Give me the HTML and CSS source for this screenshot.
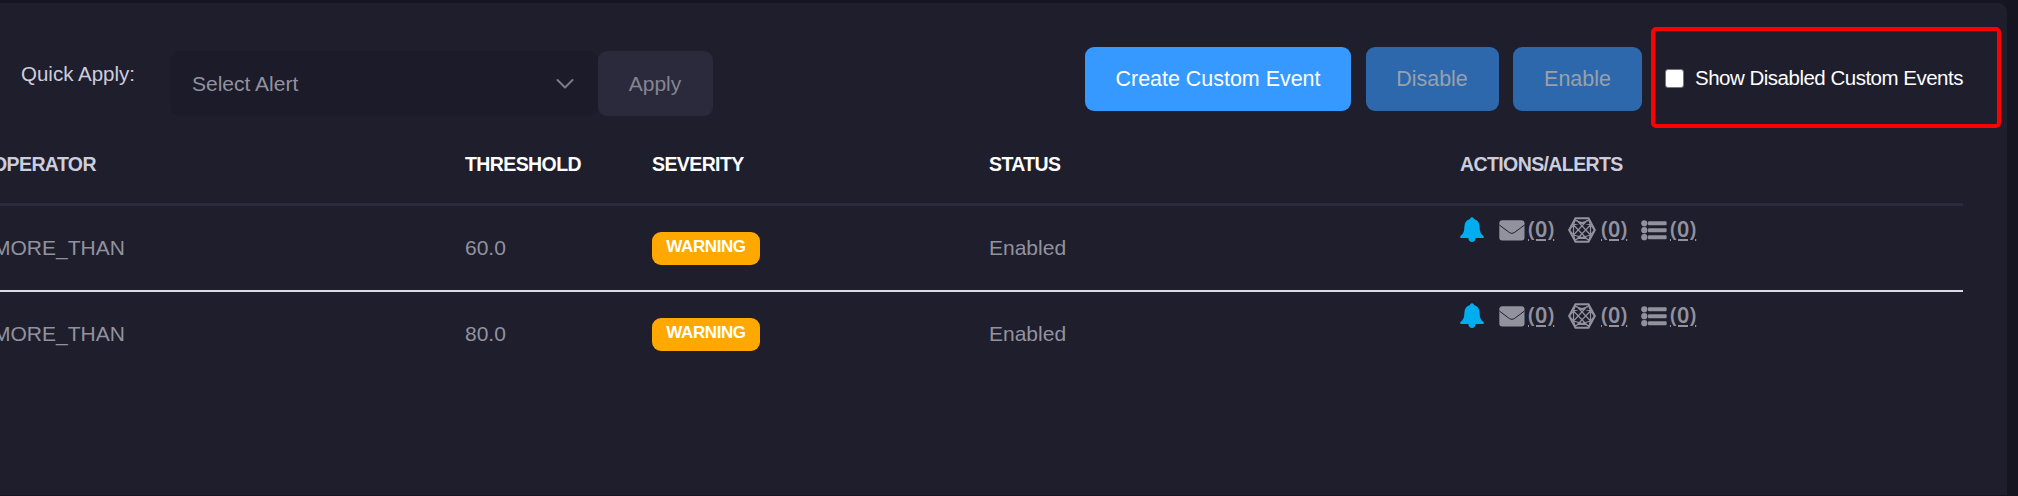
FILE: index.html
```html
<!DOCTYPE html>
<html lang="en">
<head>
<meta charset="utf-8">
<title>Custom Events</title>
<link rel="stylesheet" href="styles.css">
</head>
<body>
<svg class="sprite" aria-hidden="true">
  <symbol id="bell" viewBox="0 0 24 26"><path d="M12 0.300c1.200 0 1.900.8 1.900 1.800 3.500.9 5.500 3.600 5.700 7.400.2 5.200.9 7.100 3.800 9.400 1 .9.4 2.100-.8 2.100H1.400c-1.200 0-1.800-1.200-.8-2.100C3.500 16.600 4.200 14.700 4.400 9.500c.2-3.800 2.200-6.500 5.700-7.400 0-1 .7-1.800 1.900-1.800zM8.300 21h7.400c-.2 2.700-1.700 4-3.700 4s-3.500-1.300-3.700-4z"/></symbol>
  <symbol id="mail" viewBox="0 0 26 21"><rect x=".3" y=".3" width="25.200" height="20.200" rx="3"/><path class="cut" d="M.3 5 10.500 12.600Q12.900 14.300 15.300 12.600L25.500 5"/></symbol>
  <symbol id="mesh" viewBox="0 0 28 26"><g class="mesh-lines"><path class="mesh-edge" d="M7.500 1.300h13L26.900 13l-6.400 11.700h-13L1.100 13z"/><path d="M7.500 1.500 5.500 8v10l2 6.500M20.500 1.500l2 6.500v10l-2 6.500M5.500 8 21 3.500M22.500 8 7 3.500M5.500 18 21 22.500M22.500 18 7 22.500M5.500 8 20 23M22.500 8 8 23M5.500 18 19.500 3M22.500 18 8.500 3M1.500 13l4-5M26.500 13l-4-5M1.500 13l4 5M26.500 13l-4 5"/></g></symbol>
  <symbol id="list" viewBox="0 0 26 21"><circle cx="3.300" cy="3.300" r="3.100"/><circle cx="3.300" cy="10.200" r="3.100"/><circle cx="3.300" cy="17.200" r="3.100"/><rect x="7" y="1.300" width="18.600" height="4" rx="1"/><rect x="7" y="8.200" width="18.600" height="4" rx="1"/><rect x="7" y="15.200" width="18.600" height="4" rx="1"/></symbol>
</svg>
<main class="panel">
  <div class="toolbar">
    <span class="quick-label">Quick Apply:</span>
    <div class="select"><span>Select Alert</span><svg class="chevron" viewBox="0 0 18 12"><path d="M1.500 2 9 9.500 16.500 2"/></svg></div>
    <button class="btn apply">Apply</button>
    <div class="right">
      <button class="btn primary create">Create Custom Event</button>
      <button class="btn primary disable off">Disable</button>
      <button class="btn primary enable off">Enable</button>
      <label class="toggle"><span class="box"></span><span class="toggle-text">Show Disabled Custom Events</span></label>
    </div>
  </div>
  <div class="table">
    <div class="row head">
      <span class="muted">OPERATOR</span><span>THRESHOLD</span><span>SEVERITY</span><span>STATUS</span><span class="muted">ACTIONS/ALERTS</span>
    </div>
    <div class="row">
      <span class="op">MORE_THAN</span><span>60.0</span><span><b class="badge">WARNING</b></span><span>Enabled</span>
      <div class="actions">
        <svg class="bell"><use href="#bell"/></svg>
        <svg class="mail"><use href="#mail"/></svg><a>(0)</a>
        <svg class="mesh"><use href="#mesh"/></svg><a>(0)</a>
        <svg class="list"><use href="#list"/></svg><a>(0)</a>
      </div>
    </div>
    <div class="row last">
      <span class="op">MORE_THAN</span><span>80.0</span><span><b class="badge">WARNING</b></span><span>Enabled</span>
      <div class="actions">
        <svg class="bell"><use href="#bell"/></svg>
        <svg class="mail"><use href="#mail"/></svg><a>(0)</a>
        <svg class="mesh"><use href="#mesh"/></svg><a>(0)</a>
        <svg class="list"><use href="#list"/></svg><a>(0)</a>
      </div>
    </div>
  </div>
</main>
</body>
</html>
```
FILE: styles.css
```css
* { box-sizing: border-box; }
body {
  margin: 0;
  height: 496px;
  padding: 3px 11px 1px 0;
  overflow: hidden;
  background: #151521;
  color: #92929f;
  font: 21px/30px "Liberation Sans", Arial, sans-serif;
}
.sprite { position: absolute; width: 0; height: 0; }
.panel {
  height: 492px;
  padding: 24px 6px 0 0;
  background: #1e1e2d;
  border-radius: 0 9px 0 0;
}
.toolbar { display: flex; height: 101px; }
.quick-label {
  width: 150px;
  margin-left: 21px;
  padding-top: 32px;
  color: #cdcdde;
  font-size: 20.500px;
  line-height: 30px;
  white-space: nowrap;
}
.select {
  display: flex;
  align-items: center;
  justify-content: space-between;
  width: 427px;
  height: 65px;
  margin-top: 24px;
  padding: 0 24px 0 21px;
  background: #1b1b29;
  border-radius: 9px;
}
.chevron { width: 18px; height: 12px; fill: none; stroke: #7c7c89; stroke-width: 2; stroke-linecap: round; stroke-linejoin: round; }
.btn { padding: 0; border: 0; border-radius: 9px; font: inherit; white-space: nowrap; }
.apply { width: 115px; height: 65px; margin-top: 24px; padding-right: 1px; background: #2a2a3c; color: #858592; }
.right { display: flex; margin-left: auto; }
.primary { height: 64px; margin-top: 20px; background: #3699ff; color: #fff; font-size: 21.450px; }
.create { width: 266px; margin-right: 15px; }
.disable { width: 133px; margin-right: 14px; padding-right: 1px; }
.enable { width: 129px; margin-right: 9px; }
.off { background: #2d68ac; color: #99a0ab; }
.toggle {
  display: flex;
  width: 350px;
  height: 101px;
  padding: 38px 0 0 10px;
  border: 4px solid #fe0000;
  border-radius: 5px;
  color: #fff;
}
.box { width: 19px; height: 19px; background: #fff; border: 1px solid #767676; border-radius: 3px; }
.toggle-text { margin: -6px 0 0 11px; font-size: 20.500px; letter-spacing: -0.500px; white-space: nowrap; }
.table { margin-right: 38px; }
.row {
  display: grid;
  grid-template-columns: 465px 187px 337px 471px 1fr;
  height: 86px;
  padding-top: 27px;
  border-bottom: 2px solid #dcdce0;
}
.row.last { border-bottom-color: transparent; }
.head {
  height: 78px;
  padding-top: 21px;
  border-bottom: 3px solid #2b2b40;
  color: #fff;
  font-size: 19.500px;
  font-weight: bold;
  letter-spacing: -0.600px;
}
.muted { color: #cdcdde; }
.head .muted:first-child { margin-left: -8px; }
.op { margin-left: -7px; }
.badge {
  display: block;
  width: 108px;
  height: 33px;
  margin-top: -1px;
  background: #ffa800;
  border-radius: 9px;
  color: #fff;
  font-size: 17px;
  letter-spacing: -0.400px;
  line-height: 30px;
  text-align: center;
}
.actions { display: flex; margin-top: -16px; fill: #92929f; }
.actions svg { flex: none; }
.actions a {
  width: 26px;
  margin-right: 14px;
  font: 600 21.500px/24px "Noto Sans", sans-serif;
  text-decoration: underline 2px;
  text-underline-offset: 2px;
}
.bell { width: 24px; height: 26px; margin: 0 15px 0 0; fill: #00aeef; }
.mail { width: 26px; height: 21px; margin: 3px 3px 0 0; }
.mesh { width: 28px; height: 26px; margin-right: 5px; }
.list { width: 26px; height: 21px; margin: 3px 3px 0 0; }
.cut { fill: none; stroke: #1e1e2d; stroke-width: 1; }
.mesh-lines { fill: none; stroke: #92929f; stroke-width: 1.200; }
.mesh-edge { stroke-width: 2; }
```
